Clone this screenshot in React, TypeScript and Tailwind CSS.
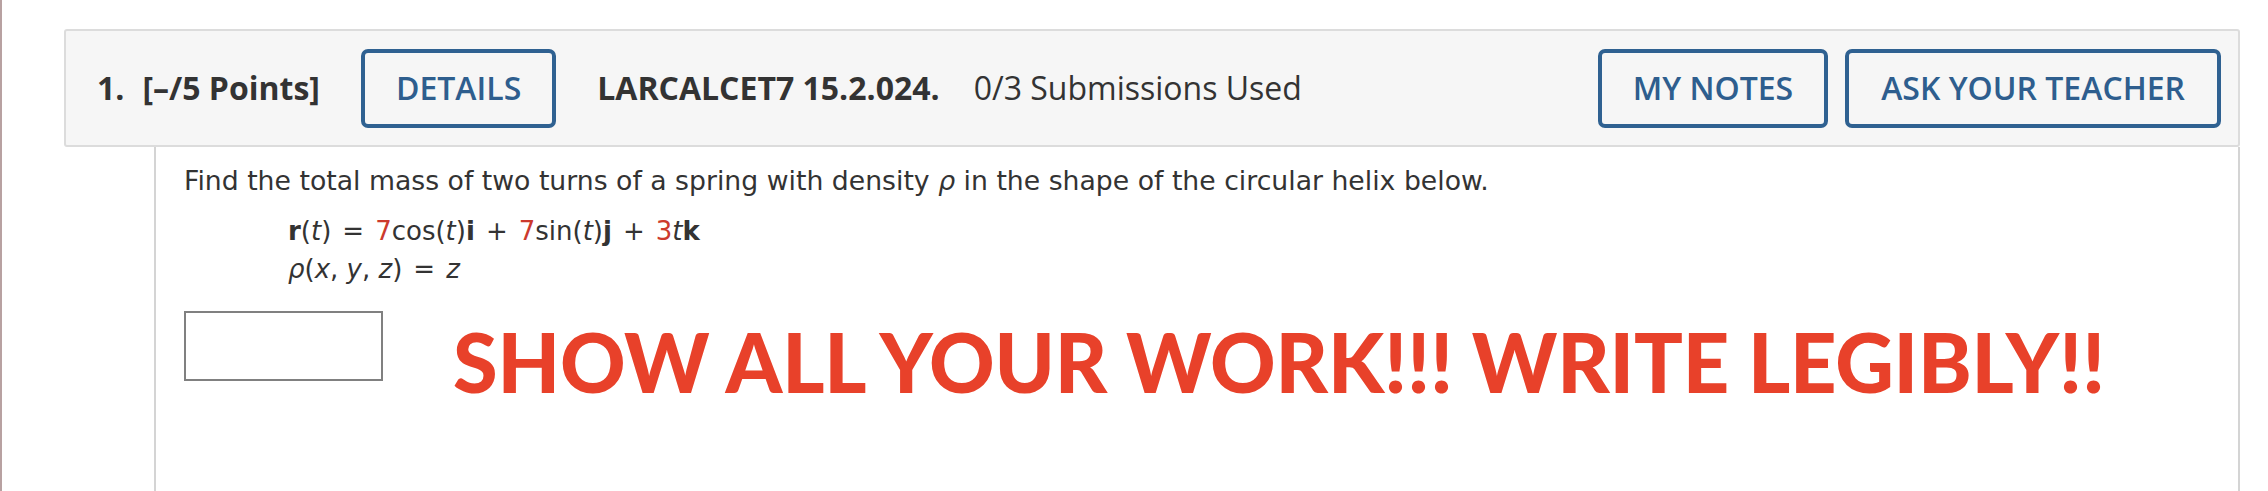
import React from "react";

const btn =
  "h-[79px] flex items-center rounded-[7px] border-[4px] border-[#2f6191] bg-[#f6f6f6] text-[#2e5e8e] font-semibold text-[32px] leading-none";

function Op({ children }: { children: React.ReactNode }) {
  return <span className="mx-[11px]">{children}</span>;
}

export default function App() {
  return (
    <div className="h-[491px] w-full bg-white flex overflow-hidden">
      <div className="w-[2px] shrink-0 bg-[#b8a1a1]" />
      <div className="flex-1 pl-[62px] pr-[28px] pt-[29px] flex flex-col">
        <header className="h-[118px] shrink-0 rounded-[3px] border-2 border-[#dcdcdc] bg-[#f6f6f6] flex items-center pl-[31px] pr-[17px] font-['Open_Sans',sans-serif] text-[32px] text-[#333]">
          <span className="font-bold">1.</span>
          <span className="ml-[18px] font-bold">[–/5 Points]</span>
          <div className={`ml-[41px] px-[31px] ${btn}`}>DETAILS</div>
          <span className="ml-[41px] font-bold">LARCALCET7 15.2.024.</span>
          <span className="ml-[34px] font-normal">0/3 Submissions Used</span>
          <div className="ml-auto flex gap-[17px]">
            <div className={`px-[31px] ${btn}`}>MY NOTES</div>
            <div className={`px-[32px] ${btn}`}>ASK YOUR TEACHER</div>
          </div>
        </header>
        <div className="flex-1 ml-[90px] border-l-2 border-r-2 border-[#d4d4d4] pl-[28px] pt-[16px] font-['DejaVu_Sans',Verdana,sans-serif] text-[#333]">
          <p className="leading-[36px] text-[26.7px]">
            Find the total mass of two turns of a spring with density <i>ρ</i> in the shape of the circular helix below.
          </p>
          <div className="ml-[104px] mt-[13px] leading-[38px] text-[26px] whitespace-nowrap">
            <div>
              <b>r</b>(<i>t</i>)<Op>=</Op><span className="text-[#cc3a2d]">7</span>cos(<i>t</i>)<b>i</b><Op>+</Op><span className="text-[#cc3a2d]">7</span>sin(<i>t</i>)<b>j</b><Op>+</Op><span className="text-[#cc3a2d]">3</span><i>t</i><b>k</b>
            </div>
            <div>
              <i>ρ</i>(<i>x</i>, <i>y</i>, <i>z</i>)<Op>=</Op><i>z</i>
            </div>
          </div>
          <div className="mt-[23px] flex items-start">
            <div className="w-[199px] h-[70px] border-2 border-[#808080] bg-white shrink-0" />
            <div className="ml-[70px] mt-[10px] font-['Lato',sans-serif] font-black text-[81px] leading-none text-[#e8412a] tracking-[-0.2px] whitespace-nowrap">
              SHOW ALL YOUR WORK!!! WRITE LEGIBLY!!
            </div>
          </div>
        </div>
      </div>
    </div>
  );
}
